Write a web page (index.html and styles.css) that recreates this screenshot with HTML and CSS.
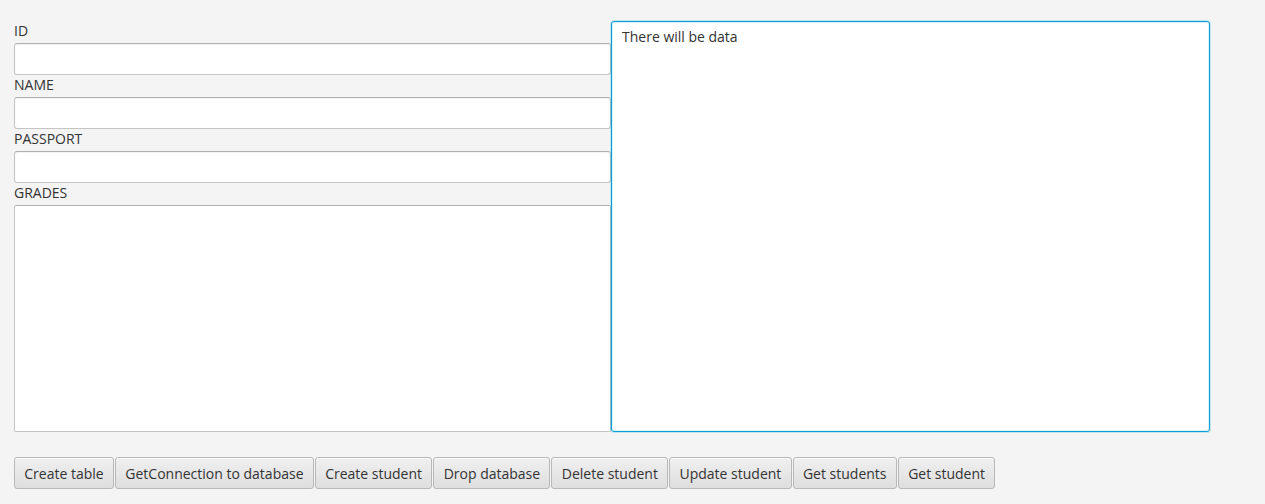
FILE: index.html
```html
<!DOCTYPE html>
<html>
<head>
<meta charset="utf-8">
<link rel="stylesheet" href="styles.css">
</head>
<body>
<div class="app">
  <div class="main">
    <div class="form">
      <label class="lbl">ID</label>
      <div class="field"></div>
      <label class="lbl">NAME</label>
      <div class="field"></div>
      <label class="lbl">PASSPORT</label>
      <div class="field"></div>
      <label class="lbl">GRADES</label>
      <div class="area"></div>
    </div>
    <div class="output">There will be data</div>
  </div>
  <div class="buttons">
    <button class="btn">Create table</button>
    <button class="btn">GetConnection to database</button>
    <button class="btn">Create student</button>
    <button class="btn">Drop database</button>
    <button class="btn">Delete student</button>
    <button class="btn">Update student</button>
    <button class="btn">Get students</button>
    <button class="btn">Get student</button>
  </div>
</div>
</body>
</html>
```
FILE: styles.css
```css
html, body {
  margin: 0;
  padding: 0;
  background: #f4f4f4;
}
body {
  font-family: "Open Sans", "Noto Sans", sans-serif;
  font-size: 14px;
  color: #333333;
}
.app {
  padding: 21px 0 0 14px;
}
.main {
  display: flex;
  align-items: flex-start;
}
.form {
  width: 597px;
  display: flex;
  flex-direction: column;
}
.lbl {
  display: block;
  height: 22px;
  line-height: 20px;
  box-sizing: border-box;
  color: #333;
}
.field {
  height: 32px;
  box-sizing: border-box;
  background: #fff;
  border: 1px solid #c4c4c4;
  border-top-color: #b0b0b0;
  border-radius: 3px;
  box-shadow: inset 0 1px 2px rgba(0,0,0,0.06);
}
.area {
  height: 227px;
  box-sizing: border-box;
  background: #fff;
  border: 1px solid #c4c4c4;
  border-top-color: #b0b0b0;
  border-radius: 2px;
}
.output {
  width: 599px;
  height: 411px;
  box-sizing: border-box;
  background: #fff;
  border: 1px solid #0a9fd8;
  border-radius: 3px;
  box-shadow: 0 0 0 1px rgba(3, 158, 211, 0.2), inset 0 0 0 1px rgba(3,158,211,0.15);
  padding: 5px 10px;
  line-height: 19px;
  color: #333;
}
.buttons {
  display: flex;
  margin-top: 25px;
  gap: 1px;
}
.btn {
  font-family: inherit;
  font-size: 14px;
  color: #333;
  height: 32px;
  padding: 0 9.3px;
  border: 1px solid #b8b8b8;
  border-radius: 3px;
  background: linear-gradient(#f0f0f0, #dedede);
  box-shadow: inset 0 1px 0 rgba(255,255,255,0.7);
  margin: 0;
}
```
